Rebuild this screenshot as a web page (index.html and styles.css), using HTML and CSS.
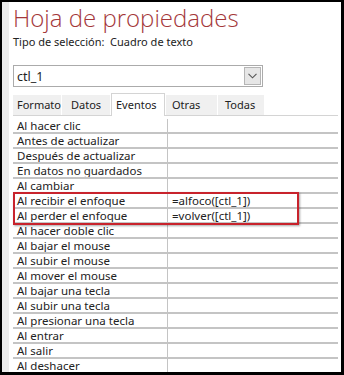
FILE: index.html
```html
<!DOCTYPE html>
<html lang="es">
<head>
    <meta charset="UTF-8">
    <meta name="viewport" content="width=device-width, initial-scale=1.0">
    <title>Hoja de propiedades</title>
    <link rel="stylesheet" href="styles.css">
</head>
<body>
    <div class="frame">
        <div class="sheet">
            <h1 class="title">Hoja de propiedades</h1>
            <p class="selection">Tipo de selección:&nbsp; Cuadro de texto</p>

            <div class="combo">
                <span class="combo-text">ctl_1</span>
                <span class="combo-btn">
                    <svg width="9" height="6" viewBox="0 0 9 6"><path d="M0.5 0.8 L4.5 4.8 L8.5 0.8" fill="none" stroke="#555" stroke-width="1.1"/></svg>
                </span>
            </div>

            <div class="tabs">
                <span class="tab tab-formato">Formato</span>
                <span class="tab tab-datos">Datos</span>
                <span class="tab tab-eventos active">Eventos</span>
                <span class="tab tab-otras">Otras</span>
                <span class="tab tab-todas">Todas</span>
            </div>

            <div class="grid">
                <div class="row"><span class="name">Al hacer clic</span><span class="value"></span></div>
                <div class="row"><span class="name">Antes de actualizar</span><span class="value"></span></div>
                <div class="row"><span class="name">Después de actualizar</span><span class="value"></span></div>
                <div class="row"><span class="name">En datos no guardados</span><span class="value"></span></div>
                <div class="row"><span class="name">Al cambiar</span><span class="value"></span></div>
                <div class="row"><span class="name">Al recibir el enfoque</span><span class="value">=alfoco([ctl_1])</span></div>
                <div class="row"><span class="name">Al perder el enfoque</span><span class="value">=volver([ctl_1])</span></div>
                <div class="row"><span class="name">Al hacer doble clic</span><span class="value"></span></div>
                <div class="row"><span class="name">Al bajar el mouse</span><span class="value"></span></div>
                <div class="row"><span class="name">Al subir el mouse</span><span class="value"></span></div>
                <div class="row"><span class="name">Al mover el mouse</span><span class="value"></span></div>
                <div class="row"><span class="name">Al bajar una tecla</span><span class="value"></span></div>
                <div class="row"><span class="name">Al subir una tecla</span><span class="value"></span></div>
                <div class="row"><span class="name">Al presionar una tecla</span><span class="value"></span></div>
                <div class="row"><span class="name">Al entrar</span><span class="value"></span></div>
                <div class="row"><span class="name">Al salir</span><span class="value"></span></div>
                <div class="row"><span class="name">Al deshacer</span><span class="value"></span></div>

                <div class="highlight"></div>
            </div>
        </div>
    </div>
</body>
</html>
```

FILE: styles.css
```css
body {
    margin: 0;
    padding: 0;
    background: #000;
    font-family: "Noto Sans", "Open Sans", sans-serif;
    color: #222;
}
.frame {
    width: 344px;
    height: 375px;
    padding: 2px 3px 3px 2px;
    box-sizing: border-box;
    overflow: hidden;
}
.sheet {
    height: 100%;
    background: #fff;
    border-left: 7px solid #ebebeb;
    padding: 0 3px 0 4px;
    overflow: hidden;
}
.title {
    margin: 0;
    font-family: "Open Sans", "Noto Sans", sans-serif;
    font-weight: 300;
    font-size: 24px;
    line-height: 32px;
    color: #a4373a;
}
.selection {
    margin: 0;
    font-size: 11px;
    line-height: 15px;
    color: #222;
}
.combo {
    margin-top: 16px;
    width: 250px;
    height: 22px;
    box-sizing: border-box;
    border: 1px solid #ababab;
    display: flex;
    align-items: center;
    justify-content: space-between;
    padding: 0 1px 0 3px;
}
.combo-text {
    font-size: 12.5px;
}
.combo-btn {
    width: 17px;
    height: 18px;
    box-sizing: border-box;
    background: #e6e6e6;
    border: 1px solid #b5b5b5;
    display: flex;
    align-items: center;
    justify-content: center;
}
.tabs {
    margin-top: 4px;
    display: flex;
    align-items: flex-end;
    height: 24px;
    border-bottom: 1px solid #d4d4d4;
    gap: 1px;
}
.tab {
    box-sizing: border-box;
    font-size: 11px;
    line-height: 20px;
    padding-left: 4px;
    background: #f0f0f0;
    color: #222;
    white-space: nowrap;
}
.tab-formato { width: 48px; }
.tab-datos { width: 48px; padding-left: 9px; }
.tab-otras { width: 51px; padding-left: 6px; }
.tab-todas { width: 46px; padding-left: 7px; }
.tab.active {
    width: 54px;
    background: #fff;
    border: 1px solid #d4d4d4;
    border-bottom: none;
    line-height: 22px;
    margin-bottom: -1px;
    padding-left: 4px;
}
.grid {
    position: relative;
    margin-top: 3px;
}
.row {
    display: flex;
    height: 15px;
    border-bottom: 2px solid #c4c4c4;
    box-sizing: border-box;
    font-size: 11.5px;
    line-height: 13px;
}
.name {
    width: 150px;
    padding-left: 4px;
    border-right: 1px solid #c4c4c4;
    white-space: nowrap;
    overflow: hidden;
}
.value {
    flex: 1;
    padding-left: 4px;
    white-space: nowrap;
}
.highlight {
    position: absolute;
    left: 0;
    top: 73px;
    width: 286px;
    height: 33px;
    box-sizing: border-box;
    border: 2px solid #c8232c;
    box-shadow: 1px 1px 2px rgba(0, 0, 0, 0.35);
}
```
